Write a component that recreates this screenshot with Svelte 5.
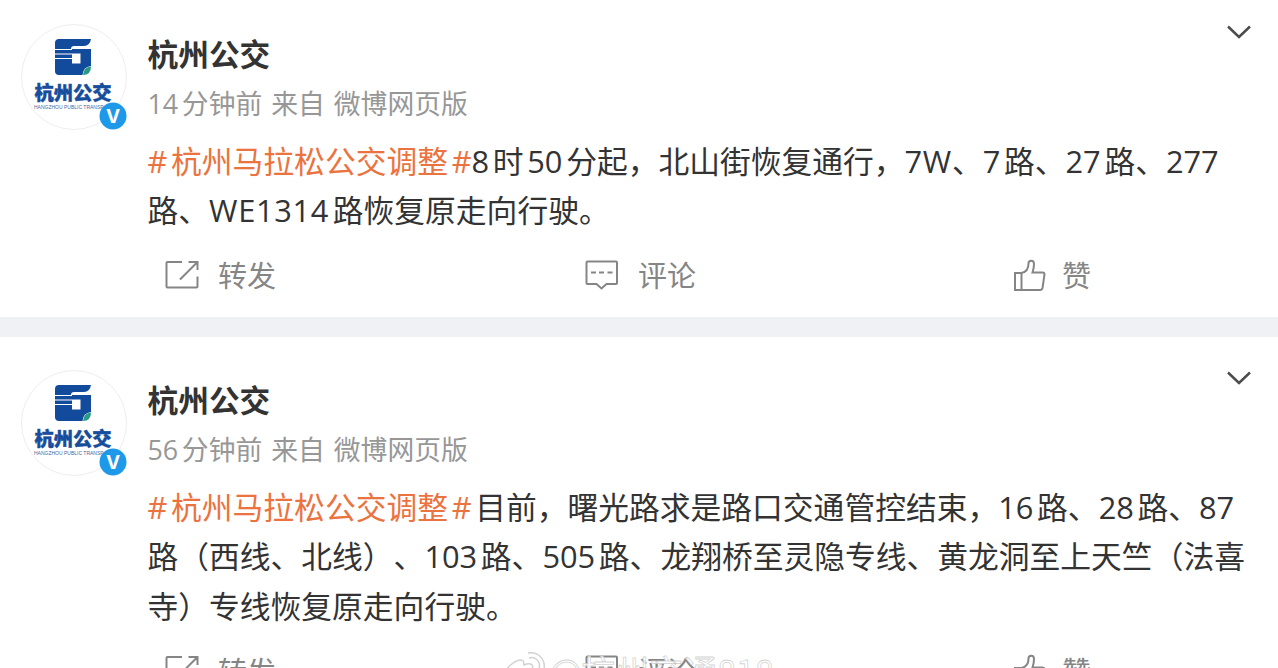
<script>
  const posts = [
    {
      time: '14分钟前',
      lines: [
        '#杭州马拉松公交调整#8时50分起，北山街恢复通行，7W、7路、27路、277',
        '路、WE1314路恢复原走向行驶。',
      ],
    },
    {
      time: '56分钟前',
      lines: [
        '#杭州马拉松公交调整#目前，曙光路求是路口交通管控结束，16路、28路、87',
        '路（西线、北线）、103路、505路、龙翔桥至灵隐专线、黄龙洞至上天竺（法喜',
        '寺）专线恢复原走向行驶。',
      ],
    },
  ];

  const HAN = /[\u4e00-\u9fff]/;

  // Latin runs are set apart so they get a small gap next to Chinese characters
  function runs(line) {
    const parts = line.match(/#|[A-Za-z0-9]+|[^#A-Za-z0-9]+/g);
    let topic = false;
    return parts.map((text, i) => {
      const latin = /^[#A-Za-z0-9]/.test(text);
      const orange = topic || text === '#';
      if (text === '#') topic = !topic;
      return {
        text,
        latin,
        caps: /[A-Z]/.test(text),
        topic: orange,
        before: latin && HAN.test((parts[i - 1] ?? '').slice(-1)),
        after: latin && HAN.test((parts[i + 1] ?? '')[0] ?? ''),
      };
    });
  }
</script>

{#snippet textLine(line)}
  {#each runs(line) as run}<span
      class:latin={run.latin}
      class:caps={run.caps}
      class:topic={run.topic}
      class:before={run.before}
      class:after={run.after}>{run.text}</span>{/each}
{/snippet}

<main class="feed">
  {#each posts as post}
    <article class="post">
      <div class="avatar">
        <svg class="mark" viewBox="0 0 36 36">
          <path d="M4 0H36Q35 6.500 29 7H19Q16 7 16 10H36V27Q28 28 27.500 36H4Q0 36 0 32V4Q0 0 4 0Z" fill="#124b9c" />
          <path d="M17 14.500H25.500V24.500H17Z" fill="#fff" />
          <path d="M0 10.500H17M0 15H17M0 19.500H17" stroke="#fff" stroke-width="1.100" />
          <path d="M36 27.500Q28.500 28 28 36Q36 36 36 27.500Z" fill="#279c82" />
        </svg>
        <b class="brand">杭州公交</b>
        <small>HANGZHOU PUBLIC TRANSP</small>
        <svg class="verified" viewBox="0 0 28 28">
          <circle cx="14" cy="14" r="13.500" fill="#1e98e8" />
          <text x="14" y="20.800" text-anchor="middle">V</text>
        </svg>
      </div>
      <div class="content">
        <header>
          <h2>杭州公交</h2>
          <svg class="chevron" viewBox="0 0 24 14">
            <path d="M1 1.500L12 12L23 1.500" fill="none" stroke="#4c4c4c" stroke-width="2.500" />
          </svg>
        </header>
        <div class="meta"><span>{@render textLine(post.time)}</span><span>来自</span><span>微博网页版</span></div>
        <div class="text">
          {#each post.lines as line}
            <p>{@render textLine(line)}</p>
          {/each}
        </div>
      </div>
      <footer>
        <button class="repost">
          <svg width="34" height="30" viewBox="0 0 34 30">
            <path d="M17 2H2.500Q1.500 2 1.500 3V26.500Q1.500 27.500 2.500 27.500H31.500Q32.500 27.500 32.500 26.500V16.500M23.500 2H32.500V10M32 2.500L15 19.500" />
          </svg>
          <span>转发</span>
        </button>
        <button class="comment">
          <svg width="34" height="30" viewBox="0 0 34 30">
            <path d="M2.500 1.500H31Q32 1.500 32 2.500V23Q32 24 31 24H21.500L16.500 28.500L11.500 24H2.500Q1.500 24 1.500 23V2.500Q1.500 1.500 2.500 1.500ZM6 12.500H11M14 12.500H19M22.500 12.500H27.500" />
          </svg>
          <span>评论</span>
        </button>
        <button class="like">
          <svg width="34" height="34" viewBox="0 0 34 34">
            <path d="M2 15H8.500V32H2ZM8.500 15C13.500 14 15.500 10.500 15.500 5.500C15.500 2 21 1.500 21 6C21 9 20.500 11.500 19.500 14.500H29.500Q31.500 14.500 31.500 16.500L29.500 30Q29 32 27 32H8.500" />
          </svg>
          <span>赞</span>
        </button>
      </footer>
    </article>
  {/each}
  <div class="watermark">
    <svg width="44" height="36" viewBox="0 0 44 36">
      <path d="M2 24C2 16 16 6 20 10C22 12 20 14 21 14C28 11 31 14 29 18C36 20 35 30 18 32C9 32 2 29 2 24ZM26 7C33 5 38 11 36 18M25 2C36 0 43 9 41 20" />
    </svg>
    <span>@杭州交通818</span>
  </div>
</main>

<style>
  :global(body) {
    overflow: hidden;
    background: #fff;
  }

  .feed {
    position: relative;
    height: 668px;
    overflow: hidden;
    background: #fff;
    color: #333;
    font-family: 'Noto Sans CJK SC', sans-serif;
    text-spacing-trim: space-all;
  }

  .post {
    display: grid;
    grid-template-columns: 126.5px 1fr;
    padding: 33px 0 0 21px;
    border-bottom: 20px solid #f0f1f5;
  }

  .post:first-child {
    margin-top: -9px;
  }

  .avatar {
    position: relative;
    box-sizing: border-box;
    width: 106px;
    height: 106px;
    display: flex;
    flex-direction: column;
    align-items: center;
    padding: 14px 2px 0 0;
    border: 1.5px solid #eee;
    border-radius: 50%;
  }

  .mark {
    width: 36px;
    height: 36px;
    flex: none;
  }

  .brand {
    margin-top: 5px;
    color: #174d9d;
    font-size: 19.3px;
    font-weight: 900;
    line-height: 24px;
    white-space: nowrap;
    -webkit-text-stroke: 0.4px #174d9d;
  }

  .avatar small {
    align-self: flex-start;
    margin-left: 12px;
    color: #47699d;
    font: 5px/6px 'Liberation Sans', sans-serif;
    white-space: nowrap;
  }

  .verified {
    position: absolute;
    right: -1px;
    bottom: -1px;
    width: 28px;
    height: 28px;
    fill: #fff;
    font: 700 19px 'Inter', sans-serif;
  }

  header {
    display: flex;
    justify-content: space-between;
    padding-right: 27px;
  }

  h2 {
    margin: 7px 0 0;
    font-size: 30.7px;
    font-weight: 700;
    line-height: 44px;
  }

  .chevron {
    width: 24px;
    height: 14px;
    margin-top: 1px;
  }

  .meta {
    display: flex;
    gap: 9px;
    margin-top: 9px;
    color: #979797;
    font-size: 26.8px;
    line-height: 38px;
  }

  .text {
    margin-top: 11.5px;
    font-size: 30.77px;
    line-height: 49.5px;
  }

  p {
    margin: 0;
    height: 49.5px;
    white-space: nowrap;
  }

  .latin {
    font-family: 'Open Sans', 'Noto Sans', sans-serif;
  }

  .text .caps {
    letter-spacing: 0.7px;
  }

  .topic {
    color: #eb7340;
  }

  .before {
    margin-left: 3.7px;
  }

  .after {
    margin-right: 3.7px;
  }

  footer {
    grid-column: 1 / -1;
    height: 83.5px;
    display: grid;
    grid-template-columns: 420px 428px 1fr;
    padding-left: 144px;
  }

  button {
    display: flex;
    align-items: center;
    gap: 19px;
    height: 82px;
    padding: 0;
    border: 0;
    background: none;
    color: #858585;
    font: 29px/40px 'Noto Sans CJK SC', sans-serif;
  }

  button span {
    margin-top: -1px;
  }

  .like {
    gap: 15px;
  }

  button svg {
    fill: none;
    stroke: #858585;
    stroke-width: 2;
  }

  .watermark {
    position: absolute;
    top: 651px;
    left: 503px;
    display: flex;
    gap: 2px;
    color: rgba(255, 255, 255, 0.75);
    font: 34px/40px 'Noto Sans CJK SC', sans-serif;
    white-space: nowrap;
    -webkit-text-stroke: 0.8px rgba(200, 200, 200, 0.8);
  }

  .watermark svg {
    fill: #fff;
    stroke: #d2d2d2;
    stroke-width: 1.5;
  }
</style>
